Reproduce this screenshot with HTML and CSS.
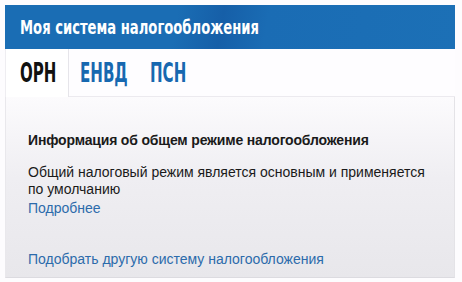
FILE: index.html
```html
<!DOCTYPE html>
<html lang="ru">
<head>
<meta charset="utf-8">
<link rel="stylesheet" href="styles.css">
</head>
<body>
<div class="widget">
  <div class="header"><span class="narrow">Моя система налогообложения</span></div>
  <div class="tabs">
    <div class="tab active"><span class="tab-label">ОРН</span></div>
    <div class="tab-rest">
      <span class="tab"><span class="tab-label">ЕНВД</span></span>
      <span class="tab"><span class="tab-label">ПСН</span></span>
    </div>
  </div>
  <div class="panel">
    <div class="title">Информация об общем режиме налогообложения</div>
    <p class="text">Общий налоговый режим является основным и применяется по умолчанию</p>
    <a class="link" href="#">Подробнее</a>
    <a class="link bottom" href="#">Подобрать другую систему налогообложения</a>
  </div>
</div>
</body>
</html>
```
FILE: styles.css
```css
html, body { margin: 0; padding: 0; background: #fdfcfe; }
body { width: 462px; height: 282px; overflow: hidden; }
.widget { margin: 5px 7px 0 5px; }
.header {
  height: 44px;
  box-sizing: border-box;
  padding: 12px 0 0 15px;
  background: linear-gradient(100deg, #1a6db4 0%, #1a6db4 38%, #165fa8 48%, #1a6cb4 58%, #1c70b6 100%);
  color: #fff;
  font-family: "DejaVu Sans Condensed", "DejaVu Sans", sans-serif;
  font-weight: bold;
  font-size: 19.5px;
  line-height: 22px;
}
.narrow {
  display: inline-block;
  white-space: nowrap;
  transform: scaleX(0.75);
  transform-origin: left center;
}
.tabs { display: flex; height: 48px; }
.tab {
  font-family: "DejaVu Sans Condensed", "DejaVu Sans", sans-serif;
  font-weight: bold;
  font-size: 27px;
  line-height: 30px;
  color: #1768b0;
}
.tab-label {
  display: inline-block;
  transform: scaleX(0.62);
  transform-origin: left center;
}
.tab-rest .tab { width: 70px; }
.tab.active {
  width: 64px;
  box-sizing: border-box;
  padding: 9px 0 0 14px;
  color: #111;
  border-right: 1px solid #e6e5ea;
  border-left: 1px solid #eeedf1;
  background: #fff;
}
.tab-rest {
  flex: 1;
  display: flex;
  padding: 9px 0 0 11px;
  border-bottom: 1px solid #eceaef;
  background: #fefdff;
}
.panel {
  height: 181px;
  box-sizing: border-box;
  padding: 34px 0 0 22px;
  border-left: 1px solid #e9e8ec;
  border-right: 1px solid #e4e3e7;
  border-bottom: 1px solid #dcdbe0;
  background: linear-gradient(180deg, #fcfbfd 0%, #efeef2 45%, #e8e7eb 100%);
  font-family: "Liberation Sans", Arial, sans-serif;
  font-size: 14px;
  line-height: 16.5px;
  color: #1a1a1a;
  display: flex;
  flex-direction: column;
  align-items: flex-start;
}
.title { font-weight: bold; font-size: 14px; line-height: 18px; letter-spacing: -0.17px; }
.text { margin: 15px 0 0; width: 410px; }
.link { color: #2c6bab; text-decoration: none; margin-top: 3px; }
.link.bottom { margin-top: 34px; }
```
